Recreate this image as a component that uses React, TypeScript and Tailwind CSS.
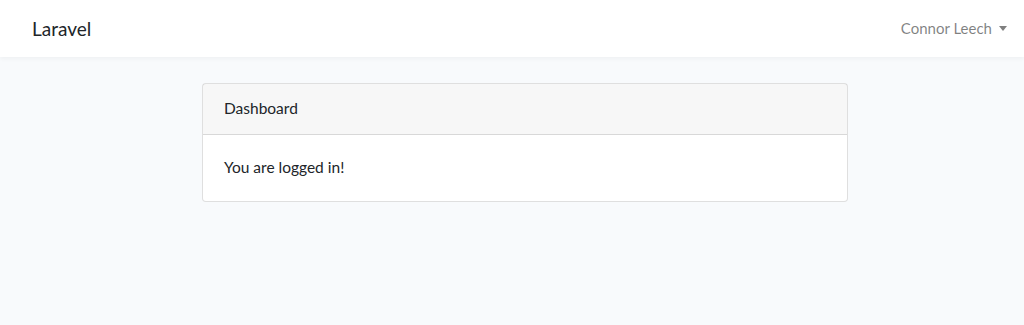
export default function App() {
  return (
    <div className="min-h-[325px] bg-[#f8fafc] font-['Lato','Noto_Sans',sans-serif] text-[#212529]">
      <nav className="flex h-[57px] items-center justify-between bg-white pl-8 pr-[17px] shadow-[0_2px_4px_rgba(0,0,0,0.04)]">
        <a className="text-[19px] leading-none text-[#212529]">Laravel</a>
        <button className="flex items-center gap-[7px] text-[15px] text-[rgba(0,0,0,0.5)]">
          <span>Connor Leech</span>
          <span className="h-0 w-0 border-x-[4.5px] border-t-[5px] border-x-transparent border-t-[rgba(0,0,0,0.5)]" />
        </button>
      </nav>
      <main className="flex justify-center pl-[26px] pt-[26px]">
        <div className="w-[646px] rounded-[4px] border border-[rgba(0,0,0,0.125)] bg-white">
          <div className="flex h-[51px] items-center border-b border-[rgba(0,0,0,0.125)] bg-[rgba(0,0,0,0.03)] px-[21px] text-[15.5px]">
            Dashboard
          </div>
          <div className="flex h-[66px] items-center px-[21px] text-[15.5px]">You are logged in!</div>
        </div>
      </main>
    </div>
  );
}
